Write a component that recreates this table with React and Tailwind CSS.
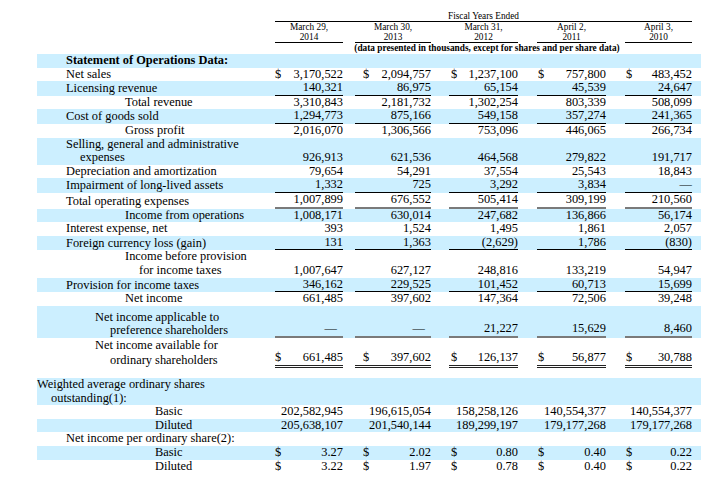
import React from "react";

// column geometry taken from the filing table
const COLS = [
  { w: "w-[68px]", dl: "" },
  { w: "ml-[12px] w-[76px]", dl: "pl-[8px]" },
  { w: "ml-[18px] w-[69px]", dl: "pl-[2px]" },
  { w: "ml-[19px] w-[69px]", dl: "pl-[1px]" },
  { w: "ml-[19px] w-[67px]", dl: "pl-[1px]" },
];

const HEADS = [
  ["March 29,", "2014"],
  ["March 30,", "2013"],
  ["March 31,", "2012"],
  ["April 2,", "2011"],
  ["April 3,", "2010"],
];

const LINES = {
  single: "border-b border-black",
  thick: "border-b-2 border-[#7a7a7a]",
  double: "border-b-[3px] border-double border-[#222]",
};

const rows = [
  { label: [["Statement of Operations Data:", "pl-[29px] font-bold"]], bg: true },
  { label: [["Net sales", "pl-[29px]"]], dollar: true, vals: ["3,170,522", "2,094,757", "1,237,100", "757,800", "483,452"] },
  { label: [["Licensing revenue", "pl-[29px]"]], bg: true, line: "single", vals: ["140,321", "86,975", "65,154", "45,539", "24,647"] },
  { label: [["Total revenue", "pl-[88px]"]], vals: ["3,310,843", "2,181,732", "1,302,254", "803,339", "508,099"] },
  { label: [["Cost of goods sold", "pl-[29px]"]], bg: true, line: "single", vals: ["1,294,773", "875,166", "549,158", "357,274", "241,365"] },
  { label: [["Gross profit", "pl-[88px]"]], vals: ["2,016,070", "1,306,566", "753,096", "446,065", "266,734"] },
  {
    label: [["Selling, general and administrative", "pl-[29px]"], ["expenses", "pl-[43px]"]],
    bg: true,
    vals: ["926,913", "621,536", "464,568", "279,822", "191,717"],
  },
  { label: [["Depreciation and amortization", "pl-[29px]"]], vals: ["79,654", "54,291", "37,554", "25,543", "18,843"] },
  { label: [["Impairment of long-lived assets", "pl-[29px]"]], bg: true, line: "single", vals: ["1,332", "725", "3,292", "3,834", "—"] },
  { label: [["Total operating expenses", "pl-[29px]"]], line: "thick", vals: ["1,007,899", "676,552", "505,414", "309,199", "210,560"] },
  { label: [["Income from operations", "pl-[88px]"]], bg: true, vals: ["1,008,171", "630,014", "247,682", "136,866", "56,174"] },
  { label: [["Interest expense, net", "pl-[29px]"]], vals: ["393", "1,524", "1,495", "1,861", "2,057"] },
  { label: [["Foreign currency loss (gain)", "pl-[29px]"]], bg: true, line: "single", vals: ["131", "1,363", "(2,629)", "1,786", "(830)"] },
  {
    label: [["Income before provision", "pl-[88px]"], ["for income taxes", "pl-[102px]"]],
    vals: ["1,007,647", "627,127", "248,816", "133,219", "54,947"],
  },
  { label: [["Provision for income taxes", "pl-[29px]"]], bg: true, line: "single", vals: ["346,162", "229,525", "101,452", "60,713", "15,699"] },
  { label: [["Net income", "pl-[88px]"]], vals: ["661,485", "397,602", "147,364", "72,506", "39,248"] },
  {
    label: [["Net income applicable to", "pl-[58px]"], ["preference shareholders", "pl-[73px]"]],
    bg: true,
    line: "thick",
    dashPad: true,
    extra: "pt-[5px]",
    vals: ["—", "—", "21,227", "15,629", "8,460"],
  },
  {
    label: [["Net income available for", "pl-[58px]"], ["ordinary shareholders", "pl-[73px] pt-[2px]"]],
    dollar: true,
    line: "double",
    extra: "pt-[1px]",
    vals: ["661,485", "397,602", "126,137", "56,877", "30,788"],
  },
  { gap: true },
  { label: [["Weighted average ordinary shares", ""], ["outstanding(1):", "pl-[14px]"]], bg: true },
  { label: [["Basic", "pl-[118px]"]], vals: ["202,582,945", "196,615,054", "158,258,126", "140,554,377", "140,554,377"] },
  { label: [["Diluted", "pl-[118px]"]], bg: true, vals: ["205,638,107", "201,540,144", "189,299,197", "179,177,268", "179,177,268"] },
  { label: [["Net income per ordinary share(2):", "pl-[29px]"]] },
  { label: [["Basic", "pl-[118px]"]], bg: true, dollar: true, vals: ["3.27", "2.02", "0.80", "0.40", "0.22"] },
  { label: [["Diluted", "pl-[118px]"]], dollar: true, vals: ["3.22", "1.97", "0.78", "0.40", "0.22"] },
];

const Row = ({ row }) => {
  if (row.gap) return <div className="h-[10px]" />;

  return (
    <div
      className={`ml-[37px] flex w-[664px] items-end ${row.bg ? "bg-[#ccefff]" : ""} ${row.extra || ""}`}
    >
      <div className="w-[238px] shrink-0">
        {row.label.map(([text, cls]) => (
          <div key={text} className={`whitespace-nowrap ${cls}`}>
            {text}
          </div>
        ))}
      </div>
      {row.vals && (
        <div className="flex">
          {row.vals.map((v, i) => (
            <div
              key={i}
              className={`flex justify-between ${COLS[i].w} ${row.line ? LINES[row.line] : ""}`}
            >
              <span className={COLS[i].dl}>{row.dollar ? "$" : ""}</span>
              <span className={row.dashPad && v === "—" ? "pr-[6px]" : ""}>{v}</span>
            </div>
          ))}
        </div>
      )}
    </div>
  );
};

const App = () => {
  return (
    <div className="h-[482px] w-[718px] overflow-hidden bg-white font-['Liberation_Serif','Times_New_Roman',serif] text-black">
      {/* Header block */}
      <div className="ml-[275px] w-[417px] pt-[12px] text-[9.3px] leading-[10px]">
        <div className="border-b border-black pb-px leading-[8px] text-center">Fiscal Years Ended</div>
        <div className="flex">
          {HEADS.map(([a, b], i) => (
            <div key={b} className={`border-b border-black text-center ${COLS[i].w}`}>
              {a}
              <br />
              {b}
            </div>
          ))}
        </div>
        <div className="mb-px whitespace-nowrap pl-[7px] text-center font-bold">
          (data presented in thousands, except for shares and per share data)
        </div>
      </div>

      {/* Table body */}
      <div className="text-[12.4px] leading-[13.6px]">
        {rows.map((row, i) => (
          <Row key={i} row={row} />
        ))}
      </div>
    </div>
  );
};

export default App;
